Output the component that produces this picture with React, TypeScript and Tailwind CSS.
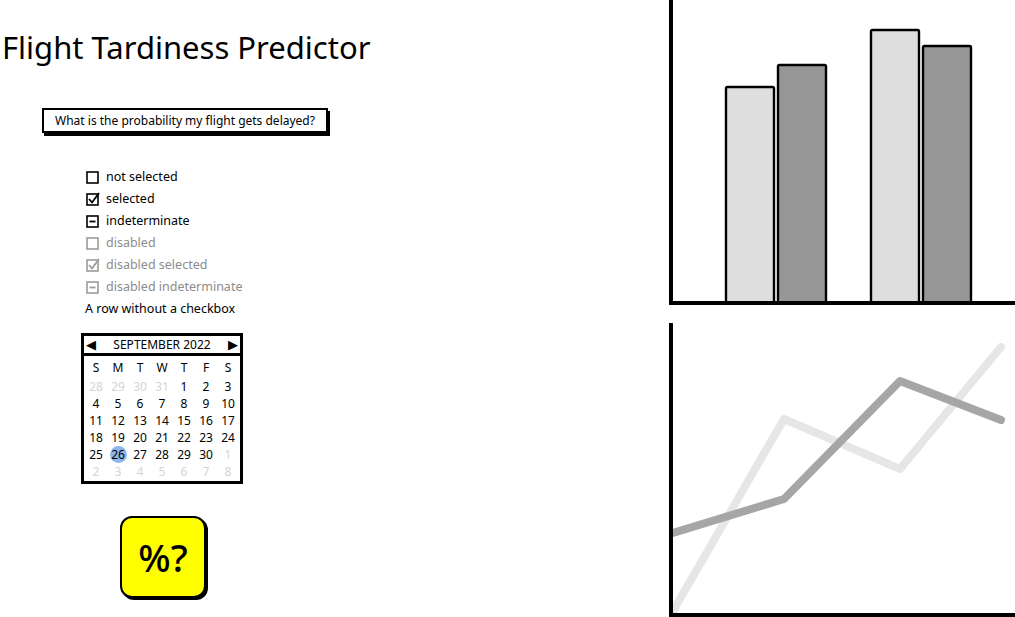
import React from "react";

type Mark = "none" | "check" | "dash";

const rows: { label: string; mark?: Mark; disabled?: boolean }[] = [
  { label: "not selected", mark: "none" },
  { label: "selected", mark: "check" },
  { label: "indeterminate", mark: "dash" },
  { label: "disabled", mark: "none", disabled: true },
  { label: "disabled selected", mark: "check", disabled: true },
  { label: "disabled indeterminate", mark: "dash", disabled: true },
  { label: "A row without a checkbox" },
];

function Box({ mark, disabled }: { mark: Mark; disabled?: boolean }) {
  const c = disabled ? "#9b9b9b" : "#000";
  return (
    <svg width="14" height="14" viewBox="0 0 14 14" className="shrink-0">
      <rect x="1" y="2" width="11" height="11" fill="none" stroke={c} strokeWidth="1.6" />
      {mark === "check" && (
        <path d="M3 7 L6 10.5 L13 1" fill="none" stroke={c} strokeWidth="1.8" strokeLinejoin="round" />
      )}
      {mark === "dash" && <path d="M3.5 7.5 H9.5" stroke={c} strokeWidth="1.8" />}
    </svg>
  );
}

// calendar cells: [label, muted]
const weeks: [string, boolean][][] = [
  [["28", true], ["29", true], ["30", true], ["31", true], ["1", false], ["2", false], ["3", false]],
  [["4", false], ["5", false], ["6", false], ["7", false], ["8", false], ["9", false], ["10", false]],
  [["11", false], ["12", false], ["13", false], ["14", false], ["15", false], ["16", false], ["17", false]],
  [["18", false], ["19", false], ["20", false], ["21", false], ["22", false], ["23", false], ["24", false]],
  [["25", false], ["26", false], ["27", false], ["28", false], ["29", false], ["30", false], ["1", true]],
  [["2", true], ["3", true], ["4", true], ["5", true], ["6", true], ["7", true], ["8", true]],
];

function Calendar() {
  return (
    <div className="ml-[81px] mt-[13px] w-[162px] border-[3px] border-black bg-white">
      <div className="flex h-[20px] items-center justify-between border-b-[3px] border-black px-[2px] text-[12px]">
        <span className="text-[13px]">◀</span>
        <span>SEPTEMBER 2022</span>
        <span className="text-[13px]">▶</span>
      </div>
      <div className="grid grid-cols-7 px-[1px] pt-[3px] pb-[1px] text-center text-[12px] leading-[17px]">
        {["S", "M", "T", "W", "T", "F", "S"].map((d, i) => (
          <div key={i} className="h-[19px]">
            {d}
          </div>
        ))}
        {weeks.flat().map(([d, muted], i) => (
          <div key={i} className="flex h-[17px] items-center justify-center">
            {d === "26" && !muted ? (
              <span className="flex h-[17px] w-[17px] items-center justify-center rounded-full bg-[#8db6ee]">
                {d}
              </span>
            ) : (
              <span className={muted ? "text-[#d4d4d4]" : "text-black"}>{d}</span>
            )}
          </div>
        ))}
      </div>
    </div>
  );
}

function BarChart() {
  const bars = [
    { x: 53, top: 87, fill: "#dedede" },
    { x: 105, top: 65, fill: "#969696" },
    { x: 198, top: 30, fill: "#dedede" },
    { x: 250, top: 46, fill: "#969696" },
  ];
  return (
    <div className="h-[305px] border-b-4 border-l-4 border-black">
      <svg width="343" height="301" viewBox="0 0 343 301">
        {bars.map((b, i) => (
          <rect
            key={i}
            x={b.x}
            y={b.top}
            width="48"
            height={301 - b.top + 2}
            rx="1.5"
            fill={b.fill}
            stroke="#000"
            strokeWidth="2.4"
          />
        ))}
      </svg>
    </div>
  );
}

function LineChart() {
  return (
    <div className="mt-[18px] h-[294px] border-b-4 border-l-4 border-black">
      <svg width="343" height="290" viewBox="0 0 343 290">
        <polyline
          points="0,288 111,96 227,146 328,24"
          fill="none"
          stroke="#e6e6e6"
          strokeWidth="8"
          strokeLinecap="round"
          strokeLinejoin="round"
        />
        <polyline
          points="0,210 111,176 227,58 328,97"
          fill="none"
          stroke="#a6a6a6"
          strokeWidth="8"
          strokeLinecap="round"
          strokeLinejoin="round"
        />
      </svg>
    </div>
  );
}

export default function App() {
  return (
    <div className="flex h-[617px] w-[1015px] overflow-hidden bg-white font-['Noto_Sans',sans-serif] text-black">
      {/* left column */}
      <div className="w-[668px] shrink-0">
        <h1 className="mt-[27px] ml-[2px] text-[31px] leading-[40px] font-normal">
          Flight Tardiness Predictor
        </h1>

        <div className="mt-[41px] ml-[42px] flex h-[25px] w-[286px] items-center justify-center border-2 border-black text-[12px] shadow-[2px_3px_0_0_#000]">
          What is the probability my flight gets delayed?
        </div>

        <div className="mt-[33px] ml-[86px] flex flex-col text-[12.5px]">
          {rows.map((r) => (
            <div
              key={r.label}
              className={`flex h-[22px] items-center gap-[6px] ${r.disabled ? "text-[#8c8c8c]" : "text-black"} ${r.mark ? "" : "-ml-[1px]"}`}
            >
              {r.mark && <Box mark={r.mark} disabled={r.disabled} />}
              <span>{r.label}</span>
            </div>
          ))}
        </div>

        <Calendar />

        <div className="mt-[32px] ml-[120px] flex h-[82px] w-[86px] items-center justify-center rounded-[12px] border-2 border-black bg-[#ffff00] text-[38px] font-medium shadow-[2px_2px_0_0_#000]">
          %?
        </div>
      </div>

      {/* right column: charts */}
      <div className="flex-1 pl-[1px]">
        <BarChart />
        <LineChart />
      </div>
    </div>
  );
}
